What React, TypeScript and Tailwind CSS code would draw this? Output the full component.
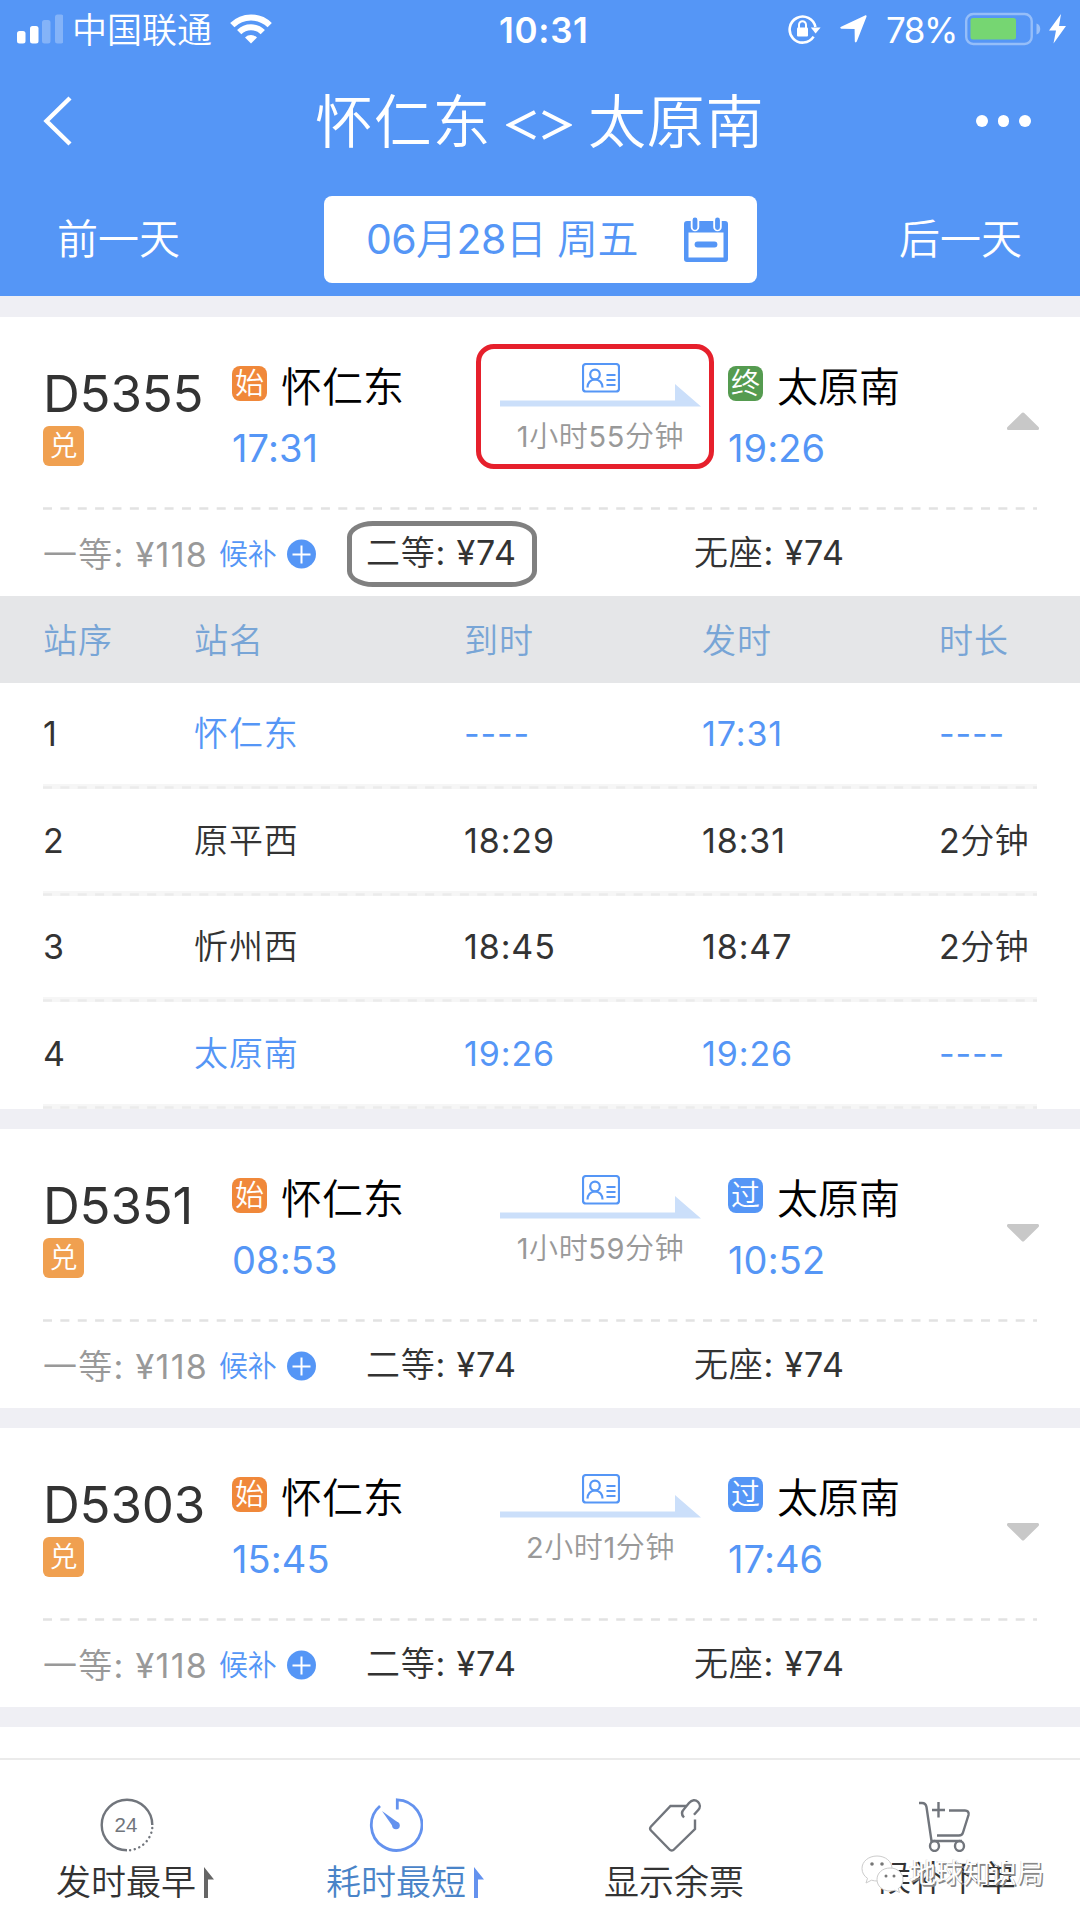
import type { ReactNode } from "react";

const stops = [
  { no: "1", name: "怀仁东", arrive: "----", depart: "17:31", stay: "----", active: true },
  { no: "2", name: "原平西", arrive: "18:29", depart: "18:31", stay: "2分钟", active: false },
  { no: "3", name: "忻州西", arrive: "18:45", depart: "18:47", stay: "2分钟", active: false },
  { no: "4", name: "太原南", arrive: "19:26", depart: "19:26", stay: "----", active: true },
];

function DashedLine({ className = "text-[#e2e2e2]" }: { className?: string }) {
  return (
    <svg className={`block w-[994px] h-[3px] ${className}`} viewBox="0 0 994 3">
      <path d="M0 1.5H994" stroke="currentColor" strokeWidth="2.4" strokeDasharray="9 8.37" />
    </svg>
  );
}

function StatusBar() {
  return (
    <div className="flex h-[58px] items-center text-white">
      <svg className="ml-[17px] w-[46px] h-[30px] mb-px" viewBox="0 0 46 30" fill="#fff">
        <rect x="0" y="17" width="8.5" height="12.5" rx="2.5" />
        <rect x="13" y="12" width="8.5" height="17.5" rx="2.5" />
        <rect x="25" y="6" width="8.5" height="23.5" rx="2.5" opacity=".28" />
        <rect x="38" y="0.5" width="8.5" height="29" rx="2.5" opacity=".28" />
      </svg>
      <span className="ml-[9px] mt-[2px] w-[141px] text-[35px] leading-[58px] whitespace-nowrap">中国联通</span>
      <svg className="ml-[17px] w-[42px] h-[30px]" viewBox="0 0 42 30" fill="none" stroke="#fff" strokeWidth="6">
        <path d="M2.3 11.2a26.5 26.5 0 0 1 37.4 0" />
        <path d="M9.2 18.2a16.7 16.7 0 0 1 23.6 0" />
        <path d="M15 23.5a8.5 8.5 0 0 1 12 0l-6 6z" fill="#fff" stroke="none" />
      </svg>
      <span className="ml-[227px] mt-[2px] w-[92px] text-[35px] leading-[58px] font-semibold tracking-[0.7px]">10:31</span>
      <svg className="ml-[197px] w-[33px] h-[30px]" viewBox="0 0 33 30" fill="none" stroke="#fff">
        <path d="M25.6 22.6A13 13 0 1 1 27.4 13" strokeWidth="2.6" />
        <path d="M22.8 13.5h9.8l-5 6z" fill="#fff" stroke="none" />
        <rect x="9" y="13.6" width="11" height="9" rx="1" fill="#fff" stroke="none" />
        <path d="M11 14v-3.2a3.5 3.5 0 0 1 7 0V14" strokeWidth="2" />
      </svg>
      <svg className="ml-[19px] w-[27px] h-[28px]" viewBox="0 0 27 28" fill="#fff">
        <path d="M26.5 1.8 16.8 26.6c-.5 1.2-2 1-2-.3L14.6 14 1.4 13.8c-1.4 0-1.6-1.5-.3-2L25 .4c1-.4 1.9.4 1.5 1.4z" />
      </svg>
      <span className="ml-[19px] mt-[2px] w-[73px] text-[35px] leading-[58px] tracking-[-1.5px]">78%</span>
      <svg className="ml-[6px] w-[102px] h-[34px]" viewBox="0 0 102 34">
        <rect x="1.2" y="2" width="65.5" height="30" rx="7" fill="none" stroke="#fff" strokeWidth="2.4" opacity=".38" />
        <rect x="5.5" y="6" width="45.5" height="21.5" rx="2.5" fill="#76d672" />
        <path d="M71.5 11.5c5 1 5 10 0 11z" fill="#fff" opacity=".4" />
        <path d="M96 2 84 18.5h7l-2.5 13L101 14h-7z" fill="#fff" />
      </svg>
    </div>
  );
}

function Header() {
  return (
    <header className="h-[296px] bg-[#5596f6] text-white">
      <StatusBar />
      <div className="flex h-[126px] items-center">
        <svg className="ml-[43px] w-[30px] h-[50px]" viewBox="0 0 30 50" fill="none" stroke="#fff" strokeWidth="4.4">
          <path d="M27 2 3.5 25 27 48" />
        </svg>
        <h1 className="ml-[242px] flex w-[451px] items-center text-[58px] leading-[80px] whitespace-nowrap">
          <span className="mt-[2px] w-[177px] tracking-[0.8px]">怀仁东</span>
          <svg className="ml-[14px] mt-[7px] w-[66px] h-[32px]" viewBox="0 0 66 32" fill="none" stroke="#fff" strokeWidth="4.2">
            <path d="M29 3 3.5 16 29 29M37 3l25.5 13L37 29" />
          </svg>
          <span className="ml-[16px] mt-[2px] tracking-[0.8px]">太原南</span>
        </h1>
        <div className="ml-[210px] flex gap-[10px]">
          <i className="size-[11.5px] rounded-full bg-white" />
          <i className="size-[11.5px] rounded-full bg-white" />
          <i className="size-[11.5px] rounded-full bg-white" />
        </div>
      </div>
      <div className="flex items-center pt-[12px] text-[41px] leading-[60px]">
        <span className="ml-[57px] -mt-px w-[267px]">前一天</span>
        <div className="flex h-[87px] w-[433px] items-center rounded-[8px] bg-white text-[#5596f6]">
          <span className="ml-[42px] -mt-px w-[312px] whitespace-pre tracking-[-0.6px]">06月28日 周五</span>
          <svg className="ml-[6px] w-[44px] h-[45px]" viewBox="0 0 44 45">
            <path fillRule="evenodd" fill="#5596f6" d="M3 4h38a3 3 0 0 1 3 3v35a3 3 0 0 1-3 3H3a3 3 0 0 1-3-3V7a3 3 0 0 1 3-3zM4.5 15.5V40.5H39.5V15.5z" />
            <path d="M11 4v6M33.5 4v6" stroke="#fff" strokeWidth="8.5" strokeLinecap="round" />
            <path d="M11 3v7.5M33.5 3v7.5" stroke="#5596f6" strokeWidth="4.8" strokeLinecap="round" />
            <path d="M13.5 27.5h17" stroke="#5596f6" strokeWidth="5.8" strokeLinecap="round" />
          </svg>
        </div>
        <span className="ml-[142px] -mt-px">后一天</span>
      </div>
    </header>
  );
}

function StationBadge({ kind }: { kind: "始" | "终" | "过" }) {
  const color = kind === "始" ? "bg-[#f0883a]" : kind === "终" ? "bg-[#559b50]" : "bg-[#5596f6]";
  return (
    <span className={`-mt-[5px] flex size-[35px] items-center justify-center rounded-[8px] text-[29px] leading-[35px] text-white ${color}`}>
      {kind}
    </span>
  );
}

function Station({ kind, name, time }: { kind: "始" | "终" | "过"; name: string; time: string }) {
  return (
    <div className="pt-[39px]">
      <div className="flex h-[60px] items-center">
        <StationBadge kind={kind} />
        <span className="ml-[14px] mt-px text-[41px] leading-[60px] text-black whitespace-nowrap">{name}</span>
      </div>
      <div className="mt-[2px] text-[38px] leading-[60px] text-[#5596f6] tracking-[0.1px]">{time}</div>
    </div>
  );
}

type TrainProps = {
  no: string;
  depart: string;
  arrive: string;
  duration: string;
  endKind: "终" | "过";
  open?: boolean;
  children?: ReactNode;
};

function TrainCard({ no, depart, arrive, duration, endKind, open, children }: TrainProps) {
  return (
    <section className="mb-[20px] bg-white">
      <div className="flex h-[190px] pl-[43px]">
        <div className="w-[189px] pt-[47px]">
          <div className="text-[51px] leading-[60px] text-[#333] tracking-[-0.2px]">{no}</div>
          <span className="mt-[2px] flex h-[40px] w-[41px] items-center justify-center rounded-[6px] bg-[#f0a050] text-[28px] leading-[40px] text-white">
            兑
          </span>
        </div>
        <div className="w-[268px]">
          <Station kind="始" name="怀仁东" time={depart} />
        </div>
        <div className="relative w-[228px]">
          {open && (
            <div className="absolute top-[27px] -left-[24px] h-[125px] w-[238px] rounded-[18px] border-[5px] border-[#e6202c]" />
          )}
          <div className="flex w-[201px] flex-col items-center pt-[46px]">
            <svg className="w-[38px] h-[30px]" viewBox="0 0 38 30" fill="none" stroke="#5596f6" strokeWidth="2.2">
              <rect x="1" y="1" width="36" height="27.5" rx="3" />
              <circle cx="13" cy="11.5" r="4.8" />
              <path d="M5.5 24.5c0-4.5 3-8 7.5-8s7.5 3.5 7.5 8M24.5 12h9M24.5 17h9M24.5 22h9" />
            </svg>
            <svg className="-mt-[9px] w-[201px] h-[23px]" viewBox="0 0 201 23" fill="#cbdffa">
              <path d="M0 16.5H175V0L201 22.5H0z" />
            </svg>
            <div className="mt-[8px] text-[29px] leading-[44px] text-[#999] tracking-[0.6px] whitespace-nowrap">{duration}</div>
          </div>
        </div>
        <Station kind={endKind} name="太原南" time={arrive} />
        <svg className="ml-auto mr-[41px] mt-[95px] w-[32px] h-[18px]" viewBox="0 0 32 18" fill="#c8c8c8">
          {open ? (
            <path d="M14.5 1.3a2 2 0 0 1 3 0L31.5 15c1 1.2.5 3-1 3h-29c-1.5 0-2-1.8-1-3z" />
          ) : (
            <path d="M14.5 16.7a2 2 0 0 0 3 0L31.5 3c1-1.2.5-3-1-3h-29c-1.5 0-2 1.8-1 3z" />
          )}
        </svg>
      </div>
      <DashedLine className="ml-[43px] text-[#e2e2e2]" />
      <div className="flex h-[86px] items-center text-[34px] leading-[60px] text-[#333] whitespace-pre">
        <div className="ml-[43px] flex w-[323px] items-center pt-[2px]">
          <span className="w-[176px] pt-px text-[#999] tracking-[1.3px]">一等: ¥118</span>
          <span className="w-[68px] pt-px text-[29px] text-[#5596f6] tracking-[-0.3px]">候补</span>
          <svg className="w-[29px] h-[30px]" viewBox="0 0 29 30">
            <circle cx="14.5" cy="15" r="14.5" fill="#5596f6" />
            <path d="M5.5 15.5h18M14.5 6.5v18" stroke="#fff" strokeWidth="2" />
          </svg>
        </div>
        <div className="relative w-[328px] tracking-[0.8px]">
          {open && (
            <div className="absolute -top-[2px] -left-[19px] h-[66px] w-[190px] rounded-[26px/16px] border-[5px] border-[#808080]" />
          )}
          二等: ¥74
        </div>
        <div className="tracking-[0.8px]">无座: ¥74</div>
      </div>
      {children}
    </section>
  );
}

function StopTable() {
  return (
    <div className="text-[34px] text-[#333] tracking-[0.9px]">
      <div className="grid h-[87px] grid-cols-[151px_270px_238px_237px_1fr] items-center bg-[#e5e6e8] pt-[2px] pl-[43px] text-[#78a5d6]">
        <span>站序</span>
        <span>站名</span>
        <span>到时</span>
        <span>发时</span>
        <span>时长</span>
      </div>
      {stops.map((s) => (
        <div key={s.no} className="h-[106.5px] pl-[43px]">
          <div className="grid h-[101px] grid-cols-[151px_270px_238px_237px_1fr] items-center">
            <span>{s.no}</span>
            <span className={s.active ? "text-[#5596f6]" : ""}>{s.name}</span>
            <span className={s.active ? "text-[#5596f6]" : ""}>{s.arrive}</span>
            <span className={s.active ? "text-[#5596f6]" : ""}>{s.depart}</span>
            <span className={s.active ? "text-[#5596f6]" : "tracking-[0.5px]"}>{s.stay}</span>
          </div>
          <div className="w-[994px] bg-[#f6f6f6] pt-[2px]">
            <DashedLine className="text-[#ebebeb]" />
          </div>
        </div>
      ))}
    </div>
  );
}

function Flag() {
  return (
    <svg className="ml-[9px] w-[10px] h-[31px]" viewBox="0 0 10 31" fill="currentColor">
      <path d="M0 0 10 12.5H4V31H0z" />
    </svg>
  );
}

function BottomBar() {
  return (
    <nav className="flex h-[163px] border-t-2 border-[#ebebeb] bg-white text-[35px] leading-[50px] text-[#333]">
      <div className="w-[270px] pl-[56px] pt-[38px]">
        <svg className="ml-[44px] w-[54px] h-[54px]" viewBox="0 0 54 54" fill="none" stroke="#71757c" strokeWidth="2.4">
          <path d="M27 52.3A25.3 25.3 0 1 1 52.3 27" />
          <path d="M52.3 30A25.3 25.3 0 0 1 29 52.3" strokeDasharray="0.1 4.7" strokeLinecap="round" />
          <text x="26" y="34" textAnchor="middle" fontSize="20.5" fill="#71757c" stroke="none" fontFamily="Liberation Sans">24</text>
        </svg>
        <div className="mt-[5px] flex items-center whitespace-nowrap">
          <span className="w-[139px]">发时最早</span>
          <span className="text-[#666]"><Flag /></span>
        </div>
      </div>
      <div className="w-[270px] pl-[56px] pt-[38px] text-[#4a84c8]">
        <svg className="ml-[43px] w-[54px] h-[54px]" viewBox="0 0 54 54" fill="none" stroke="#6492ee" strokeWidth="2.8">
          <path d="M28.3 11.5V1.8A25.3 25.3 0 1 1 11 8" />
          <circle cx="27" cy="27.5" r="3.8" fill="#6492ee" stroke="none" />
          <path d="M13 13 29 24.5 24.5 29.5z" fill="#6492ee" stroke="none" />
        </svg>
        <div className="mt-[5px] flex items-center whitespace-nowrap">
          <span className="w-[139px]">耗时最短</span>
          <span className="text-[#6492ee]"><Flag /></span>
        </div>
      </div>
      <div className="w-[270px] pl-[64px] pt-[38px]">
        <svg className="ml-[44px] w-[54px] h-[54px]" viewBox="0 0 54 54" fill="none" stroke="#71757c" strokeWidth="2.4">
          <path d="M38 8H22.5L3 28.5a3 3 0 0 0 0 4L21.5 51.5a3 3 0 0 0 4.5 0L47 31V21.5" />
          <path d="M36 19.5c-3-3-2.5-6 .5-9l4.5-5.5c3-3.5 6.5-3.5 9-1.2 2.5 2.5 2.5 6 0 8.5l-4 4.5" />
        </svg>
        <div className="mt-[5px] whitespace-nowrap">显示余票</div>
      </div>
      <div className="relative w-[270px] pl-[66px] pt-[38px]">
        <svg className="ml-[43px] w-[54px] h-[54px]" viewBox="0 0 54 54" fill="none" stroke="#71757c" strokeWidth="2.4">
          <path d="M0 5h3c2.500 0 4 1.500 4.500 4L12.500 43H43M18 37.500H40c2.500 0 3.500-1 4-3L49.500 17c.7-3-1-4.500-3.500-4.500H30M19.500 4v15.500M13 12h13" />
          <ellipse cx="15.5" cy="48" rx="4.5" ry="5" />
          <ellipse cx="40.5" cy="48" rx="4.5" ry="5" />
        </svg>
        <div className="mt-px whitespace-nowrap">候补下单</div>
        {/* 公众号水印 */}
        <div className="absolute top-[92px] left-[51px] flex items-center">
          <svg className="w-[44px] h-[38px]" viewBox="0 0 44 38" fill="#fff" stroke="#ccc" strokeWidth="1">
            <path d="M16 1C7.500 1 1 6.500 1 13.500c0 4 2 7.500 5.500 9.800L5 28l5.500-2.800c2 .6 4 .8 6 .8 8 0 14.500-5.500 14.500-12.500S24.500 1 16 1z" />
            <path d="M29 13c-7.500 0-13 5-13 11.500S21.500 36 29 36c1.700 0 3.300-.3 5-.8l4.500 2.300-1.200-4C40.500 31.500 42 28 42 24.500 42 18 36.500 13 29 13z" />
            <g fill="#777" stroke="none">
              <circle cx="11" cy="9" r="1.800" />
              <circle cx="21" cy="9" r="1.800" />
              <circle cx="25" cy="21" r="1.500" />
              <circle cx="33" cy="21" r="1.500" />
            </g>
          </svg>
          <span className="ml-[4px] text-[27px] leading-[44px] text-white whitespace-nowrap [text-shadow:1.5px_1.5px_0.5px_#888,-0.5px_-0.5px_0_#ccc]">
            地球知识局
          </span>
        </div>
      </div>
    </nav>
  );
}

export default function App() {
  return (
    <div className="flex h-[1921px] w-[1080px] flex-col overflow-hidden bg-[#efeff4] font-['Inter','Noto_Sans_CJK_SC_DemiLight','Noto_Sans_CJK_SC',sans-serif]">
      <Header />
      <div className="mt-[21px]">
        <TrainCard no="D5355" depart="17:31" arrive="19:26" duration="1小时55分钟" endKind="终" open>
          <StopTable />
        </TrainCard>
        <TrainCard no="D5351" depart="08:53" arrive="10:52" duration="1小时59分钟" endKind="过" />
        <TrainCard no="D5303" depart="15:45" arrive="17:46" duration="2小时1分钟" endKind="过" />
      </div>
      <div className="grow bg-white" />
      <BottomBar />
    </div>
  );
}
